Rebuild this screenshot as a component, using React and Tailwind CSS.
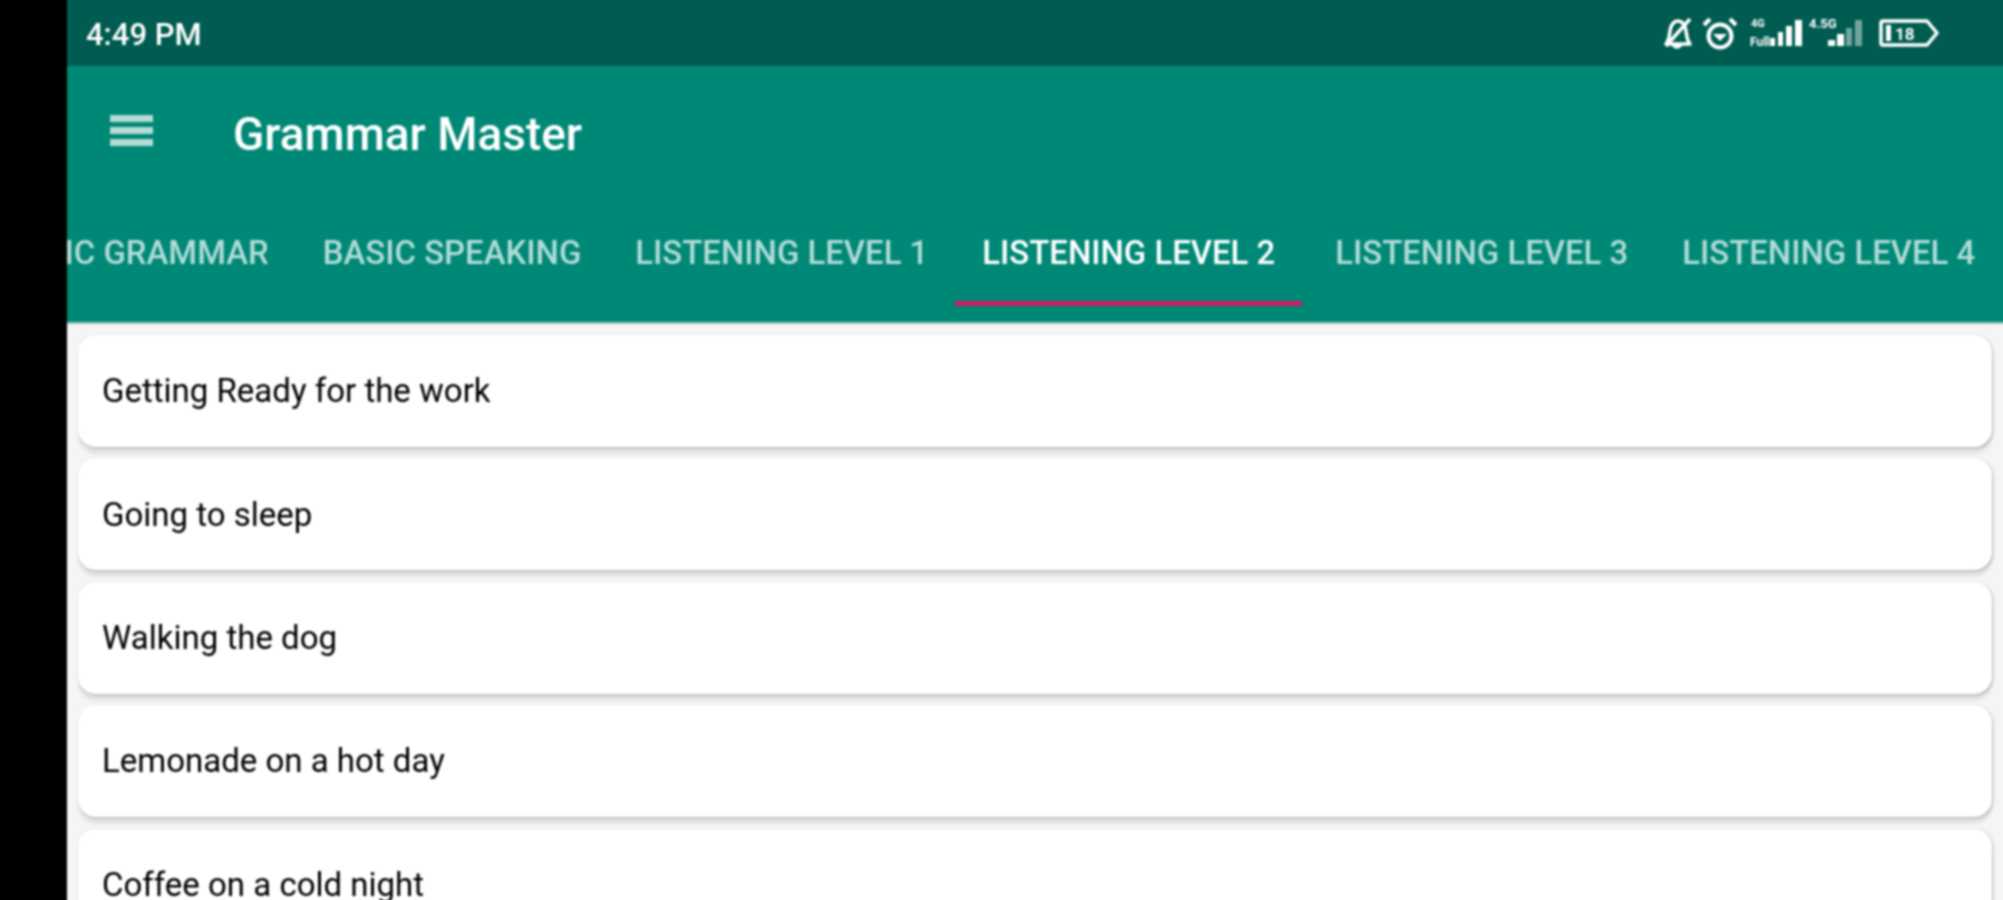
const tabs = [
  "BASIC GRAMMAR",
  "BASIC SPEAKING",
  "LISTENING LEVEL 1",
  "LISTENING LEVEL 2",
  "LISTENING LEVEL 3",
  "LISTENING LEVEL 4",
];

const lessons = [
  "Getting Ready for the work",
  "Going to sleep",
  "Walking the dog",
  "Lemonade on a hot day",
  "Coffee on a cold night",
];

const StatusIcons = () => (
  <svg width="280" height="38" viewBox="0 0 280 38" fill="none" className="text-white">
    {/* muted bell */}
    <path d="M6 30c3-3 3-7 4-13 1-6 4-10 8-10s7 4 8 10c1 6 1 10 4 13z" stroke="currentColor" strokeWidth="3.5" strokeLinejoin="round" />
    <path d="M12 31c1 5 9 5 10 0z" fill="currentColor" />
    <path d="M30 5L6 32" stroke="currentColor" strokeWidth="3.5" />
    {/* alarm */}
    <circle cx="60" cy="22" r="11.5" stroke="currentColor" strokeWidth="4" />
    <path d="M53 20h14l-7 7z" fill="currentColor" />
    <path d="M44 11l6-6M76 11l-6-6" stroke="currentColor" strokeWidth="4" />
    {/* sim 1 */}
    <text x="91" y="13" fontSize="11" fontWeight="700" fill="currentColor" fontFamily="Roboto, sans-serif">4G</text>
    <text x="90" y="32" fontSize="12" fontWeight="700" fill="currentColor" fontFamily="Roboto, sans-serif">Full</text>
    <rect x="110" y="24" width="5" height="8" fill="currentColor" />
    <rect x="118" y="18" width="5" height="14" fill="currentColor" />
    <rect x="126" y="12" width="6" height="20" fill="currentColor" />
    <rect x="135" y="6" width="7" height="26" fill="currentColor" />
    {/* sim 2 */}
    <text x="149" y="14" fontSize="13" fontWeight="700" fill="currentColor" fontFamily="Roboto, sans-serif">4.5G</text>
    <rect x="168" y="26" width="7" height="6" fill="currentColor" />
    <rect x="177" y="20" width="7" height="12" fill="currentColor" />
    <rect x="186" y="14" width="6" height="18" fill="currentColor" opacity="0.45" />
    <rect x="195" y="6" width="7" height="26" fill="currentColor" opacity="0.45" />
    {/* battery */}
    <path d="M223 7h44l10 12-10 12h-44a2 2 0 0 1-2-2V9a2 2 0 0 1 2-2z" stroke="currentColor" strokeWidth="3.5" strokeLinejoin="round" />
    <rect x="226" y="11" width="5" height="16" fill="currentColor" />
    <text x="235" y="26" fontSize="17" fontWeight="700" fill="currentColor" fontFamily="Roboto, sans-serif">18</text>
  </svg>
);

export default function App() {
  return (
    <div className="h-[900px] w-full overflow-hidden bg-black pl-[67px] font-['Roboto',sans-serif]">
      {/* runs 4px past the top and right so the blur has no pale fringe there */}
      <div className="-mr-[4px] -mt-[4px] flex h-[908px] flex-col overflow-hidden bg-[#f5f5f5] blur-[0.8px]">
        {/* Status bar */}
        <div className="flex h-[70px] shrink-0 items-center justify-between bg-[#005c50] pl-[19px] pr-[67px] pt-[4px]">
          <span className="mt-[4px] text-[31px] font-medium text-white">4:49 PM</span>
          <StatusIcons />
        </div>

        {/* Toolbar */}
        <div className="flex h-[134px] shrink-0 items-center bg-[#008876] pl-[43px]">
          <div className="mb-[6px] flex w-[43px] flex-col gap-[5px]">
            <div className="h-[7px] bg-[#b5dbd5]" />
            <div className="h-[7px] bg-[#b5dbd5]" />
            <div className="h-[7px] bg-[#b5dbd5]" />
          </div>
          <h1 className="ml-[80px] mt-[2px] text-[46px] font-medium text-white">Grammar Master</h1>
        </div>

        {/* Tabs */}
        <div className="h-[124px] shrink-0 overflow-hidden border-b-[2px] border-[#9cc9c2] bg-[#008876]">
          <div className="-ml-[92px] flex">
            {tabs.map((tab, i) => (
              <div
                key={tab}
                className={`h-[106px] shrink-0 whitespace-nowrap border-b-[5px] px-[27px] pt-[28px] text-[32.9px] font-medium ${
                  i === 3 ? "border-[#cf1b5f] text-white" : "border-transparent text-[#b2dcd7]"
                } ${i === 4 ? "ml-[6px]" : ""}`}
              >
                {tab}
              </div>
            ))}
          </div>
        </div>

        {/* Lesson list */}
        <div className="flex flex-col gap-[11.4px] pl-[11px] pr-[15px] pt-[11px]">
          {lessons.map((lesson) => (
            <div
              key={lesson}
              className="flex h-[112px] shrink-0 items-center rounded-[18px] bg-white px-[24px] text-[33px] text-black shadow-[0_7px_3px_rgba(0,0,0,0.07),1px_1px_3px_rgba(0,0,0,0.25)]"
            >
              {lesson}
            </div>
          ))}
        </div>
      </div>
    </div>
  );
}
